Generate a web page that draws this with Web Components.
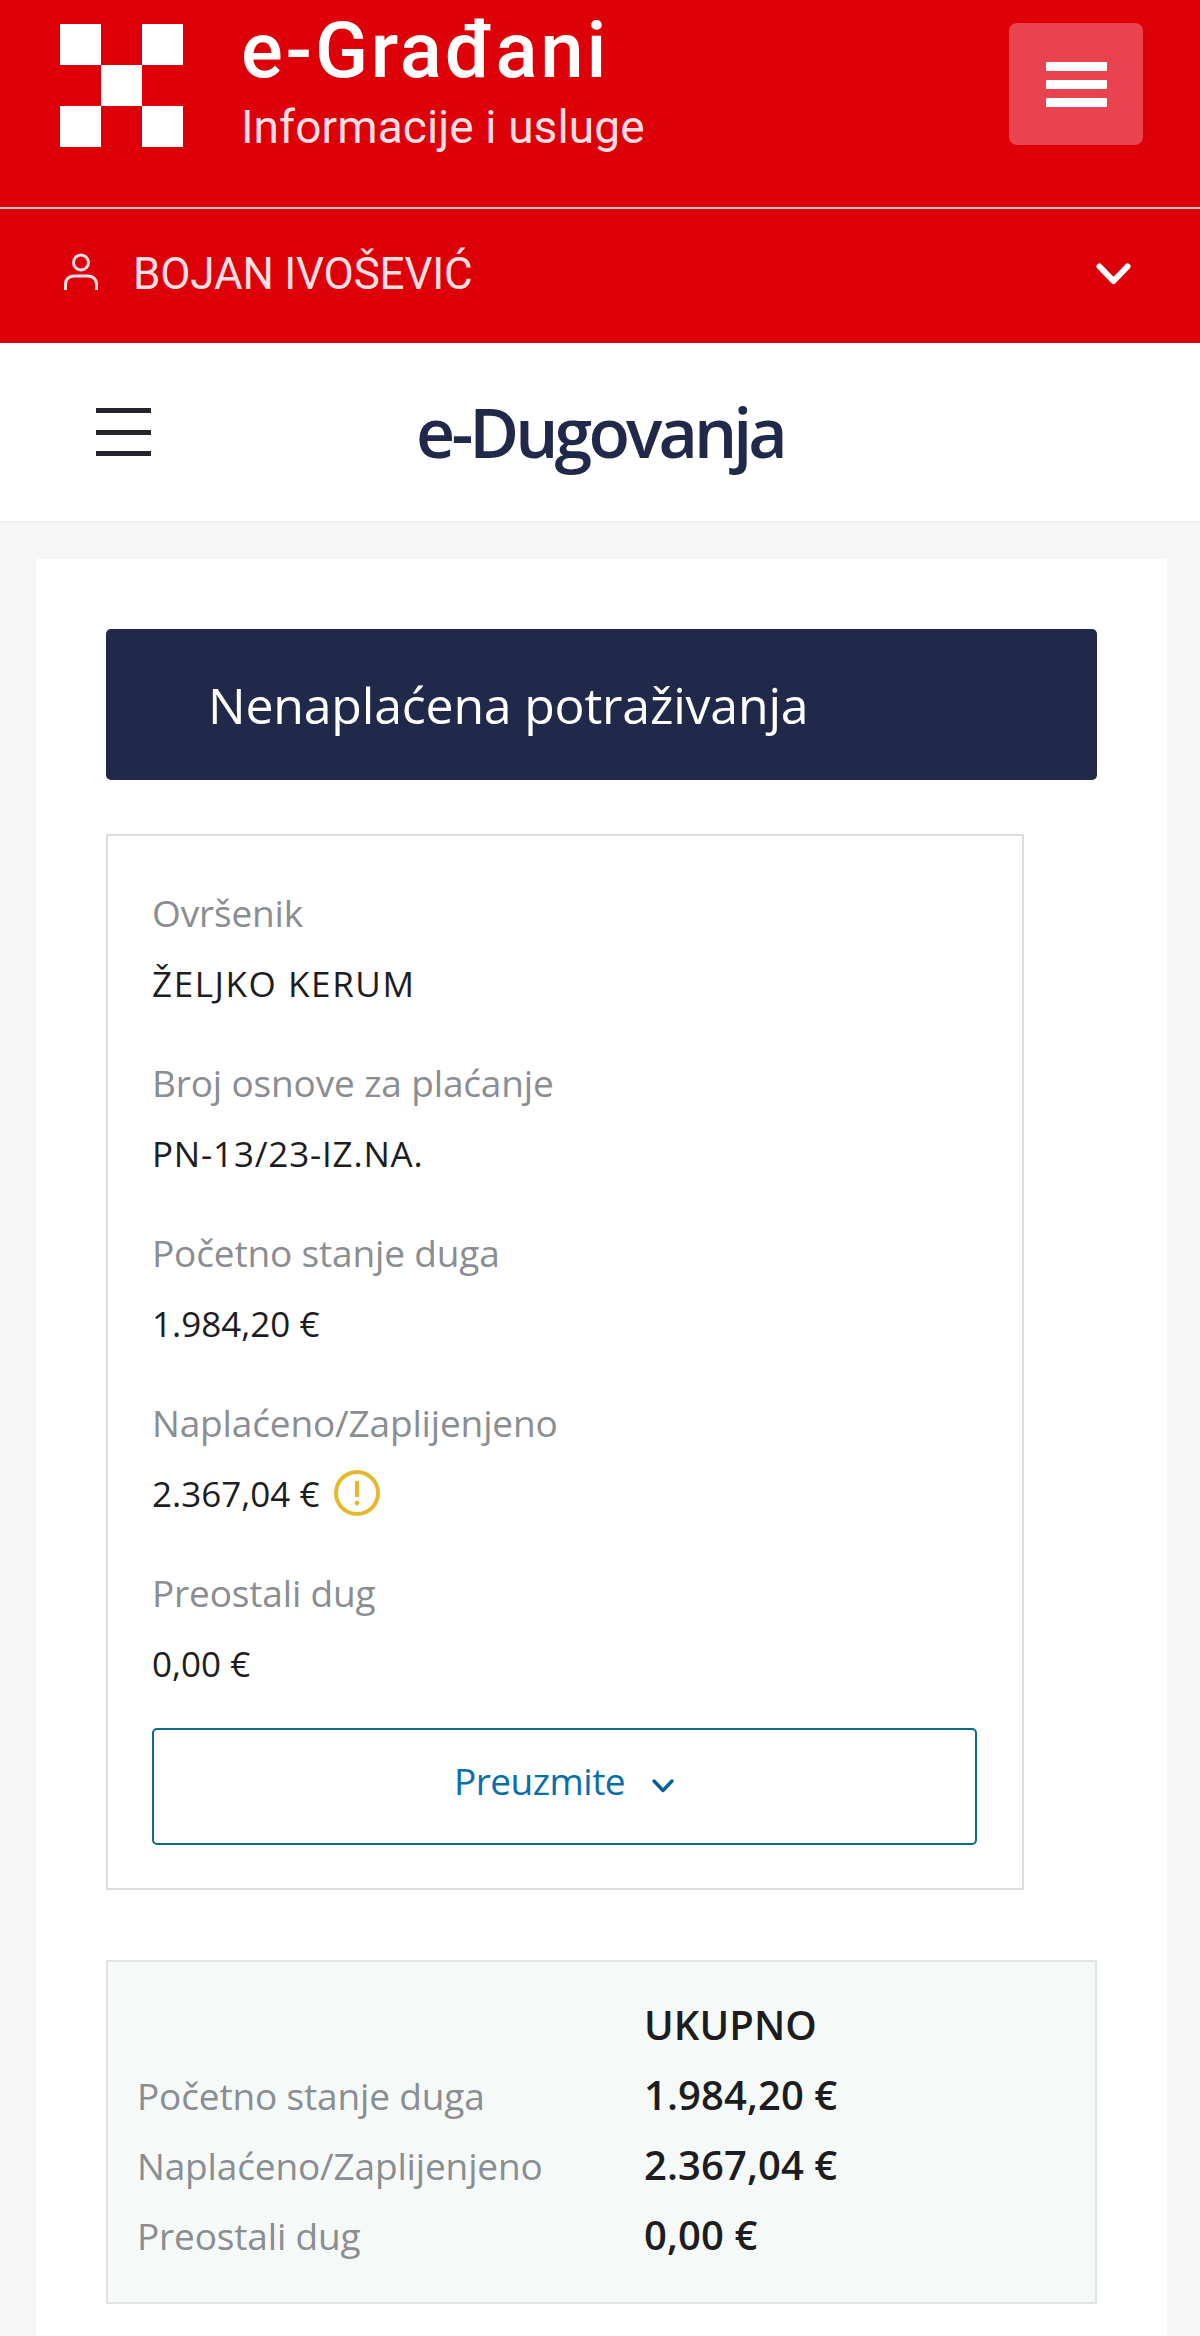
<!DOCTYPE html>
<html lang="hr"><head><meta charset="utf-8"><title>e-Dugovanja</title>
<style>
html,body{margin:0;padding:0;background:#f6f6f6}
body{width:1200px;height:2336px;overflow:hidden;font-family:"Open Sans","Noto Sans",sans-serif}
</style></head><body>
<eg-header></eg-header>
<eg-user name="BOJAN IVOŠEVIĆ"></eg-user>
<eg-subnav title="e-Dugovanja"></eg-subnav>
<eg-card>
  <eg-banner>Nenaplaćena potraživanja</eg-banner>
  <eg-details>
    <eg-field label="Ovršenik" style="--vs:1.6px">ŽELJKO KERUM</eg-field>
    <eg-field label="Broj osnove za plaćanje" style="--vs:.8px">PN-13/23-IZ.NA.</eg-field>
    <eg-field label="Početno stanje duga">1.984,20 €</eg-field>
    <eg-field label="Naplaćeno/Zaplijenjeno">2.367,04 € <eg-warn></eg-warn></eg-field>
    <eg-field label="Preostali dug">0,00 €</eg-field>
    <eg-download slot="action">Preuzmite</eg-download>
  </eg-details>
  <eg-summary>
    <eg-sumrow label="" head>UKUPNO</eg-sumrow>
    <eg-sumrow label="Početno stanje duga">1.984,20 €</eg-sumrow>
    <eg-sumrow label="Naplaćeno/Zaplijenjeno">2.367,04 €</eg-sumrow>
    <eg-sumrow label="Preostali dug">0,00 €</eg-sumrow>
  </eg-summary>
</eg-card>
<script>
function def(name, html, init){
  customElements.define(name, class extends HTMLElement{
    constructor(){super();this.attachShadow({mode:'open'}).innerHTML=html;}
    connectedCallback(){ if(init) init(this, this.shadowRoot); }
  });
}
def('eg-header',`<style>
:host{display:flex;align-items:flex-start;height:207px;background:#de0008;box-sizing:border-box;padding:0 57px 0 60px;color:#fff;font-family:Roboto,sans-serif}
.logo{margin-top:24px;width:123px;height:123px;display:grid;grid-template:repeat(3,41px)/repeat(3,41px);flex:none}
.logo i{display:block}.logo i.w{background:#fff}
.txt{margin:11px 0 0 58px;flex:1}
.t{font-size:78px;line-height:80px;font-weight:500;letter-spacing:2.8px}
.s{font-size:46px;line-height:50px;margin-top:11px;color:#f9dfe2;letter-spacing:.1px}
.m{margin-top:23px;width:134px;height:122px;background:#e8434f;border-radius:8px;display:flex;flex-direction:column;align-items:center;justify-content:center;gap:9px}
.m b{display:block;width:61px;height:9px;background:#fff;border-radius:1px}
</style>
<div class="logo"><i class="w"></i><i></i><i class="w"></i><i></i><i class="w"></i><i></i><i class="w"></i><i></i><i class="w"></i></div>
<div class="txt"><div class="t">e-Građani</div><div class="s">Informacije i usluge</div></div>
<div class="m"><b></b><b></b><b></b></div>`);
def('eg-user',`<style>
:host{display:flex;align-items:center;height:136px;background:#de0008;border-top:2px solid #f2c3c9;box-sizing:border-box;padding:0 69px 4px 64px;color:#f9dfe2;font-family:Roboto,sans-serif}
svg{display:block;flex:none}
.i{margin-top:-5px}
.n{flex:1;margin-left:35px;font-size:44px;line-height:50px;letter-spacing:-.2px}
</style>
<svg class="i" width="34" height="38" viewBox="0 0 34 38" fill="none" stroke="#f9dfe2" stroke-width="3"><circle cx="17" cy="9.5" r="7.5"/><path d="M1.5 37V31C1.5 26 5.5 23 10 23H24C28.5 23 32.5 26 32.5 31V37"/></svg>
<div class="n"></div>
<svg width="35" height="22" viewBox="0 0 35 22" fill="none" stroke="#fff" stroke-width="6" stroke-linecap="round" stroke-linejoin="round"><path d="M3.5 3.5L17.5 18L31.5 3.5"/></svg>`,
(h,r)=>{r.querySelector('.n').textContent=h.getAttribute('name')});
def('eg-subnav',`<style>
:host{display:grid;grid-template-columns:1fr auto 1fr;align-items:center;height:180px;background:#fff;border-bottom:2px solid #f1f1f1;box-sizing:border-box;padding-left:96px}
.b{display:flex;flex-direction:column;gap:16.5px;width:55px}
.b i{display:block;height:5px;background:#23252b}
h1{margin:0 96px 0 0;font-family:"Open Sans",sans-serif;font-size:68px;line-height:90px;font-weight:600;color:#20294a;letter-spacing:-3.9px}
</style><div class="b"><i></i><i></i><i></i></div><h1></h1><div></div>`,
(h,r)=>{r.querySelector('h1').textContent=h.getAttribute('title')});
def('eg-card',`<style>
:host{display:block;box-sizing:border-box;margin:36px 33px 0 36px;background:#fff;padding:70px;height:1777px}
</style><slot></slot>`);
def('eg-banner',`<style>
:host{display:flex;align-items:center;height:151px;background:#20294a;border-radius:5px;box-sizing:border-box;padding-left:102px;color:#fff;font-size:50px;letter-spacing:-.2px;line-height:60px;margin-bottom:54px}
</style><slot></slot>`);
def('eg-details',`<style>
:host{display:block;box-sizing:border-box;width:918px;border:2px solid #dcdcdc;padding:52px 45px 43px 44px;background:#fff;margin-bottom:70.5px}
.f{display:flex;flex-direction:column;gap:49px;margin-bottom:38.5px}
</style><div class="f"><slot></slot></div><slot name="action"></slot>`);
def('eg-field',`<style>
:host{display:flex;flex-direction:column;gap:21px}
.l{font-size:37px;line-height:50px;color:#8a8d91;letter-spacing:-.15px}
.v{display:flex;align-items:center;gap:5px;font-size:35px;line-height:50px;color:#1d1d1f;letter-spacing:var(--vs,0);white-space:pre}
</style><div class="l"></div><div class="v"><slot></slot></div>`,
(h,r)=>{r.querySelector('.l').textContent=h.getAttribute('label')});
def('eg-warn',`<style>:host{display:inline-flex;vertical-align:middle;margin-top:-2px}</style>
<svg width="46" height="46" viewBox="0 0 46 46" fill="none"><circle cx="23" cy="23" r="21" stroke="#e6b92c" stroke-width="4"/><path d="M23 11V27" stroke="#e6b92c" stroke-width="4"/><circle cx="23" cy="33" r="2.4" fill="#e6b92c"/></svg>`);
def('eg-download',`<style>
:host{display:flex;align-items:center;justify-content:center;gap:26px;height:117px;box-sizing:border-box;border:2px solid #0f6a8b;border-radius:5px;color:#0a6ea8;font-size:37px;letter-spacing:-.5px;line-height:50px;background:#fff;padding-bottom:11px}
svg{display:block;margin-top:10px}
</style><slot></slot><svg width="24" height="16" viewBox="0 0 24 16" fill="none" stroke="#0a5f95" stroke-width="3.5" stroke-linecap="round" stroke-linejoin="round"><path d="M3 3L12 12.5L21 3"/></svg>`);
def('eg-summary',`<style>
:host{display:block;box-sizing:border-box;height:344px;background:#f5f9f7;border:2px solid #dfe3e4;padding:28px 29px 0}
</style><slot></slot>`);
def('eg-sumrow',`<style>
:host{display:grid;grid-template-columns:507px 1fr;height:70px;align-items:baseline;line-height:70px}
.l{color:#8a8d91;font-size:37px;letter-spacing:-.15px}
.v{color:#1d1d1f;font-weight:600;font-size:40px;letter-spacing:.1px}
</style><div class="l"></div><div class="v"><slot></slot></div>`,
(h,r)=>{r.querySelector('.l').innerHTML=h.getAttribute('label')||'&nbsp;'});
</script>
</body></html>
